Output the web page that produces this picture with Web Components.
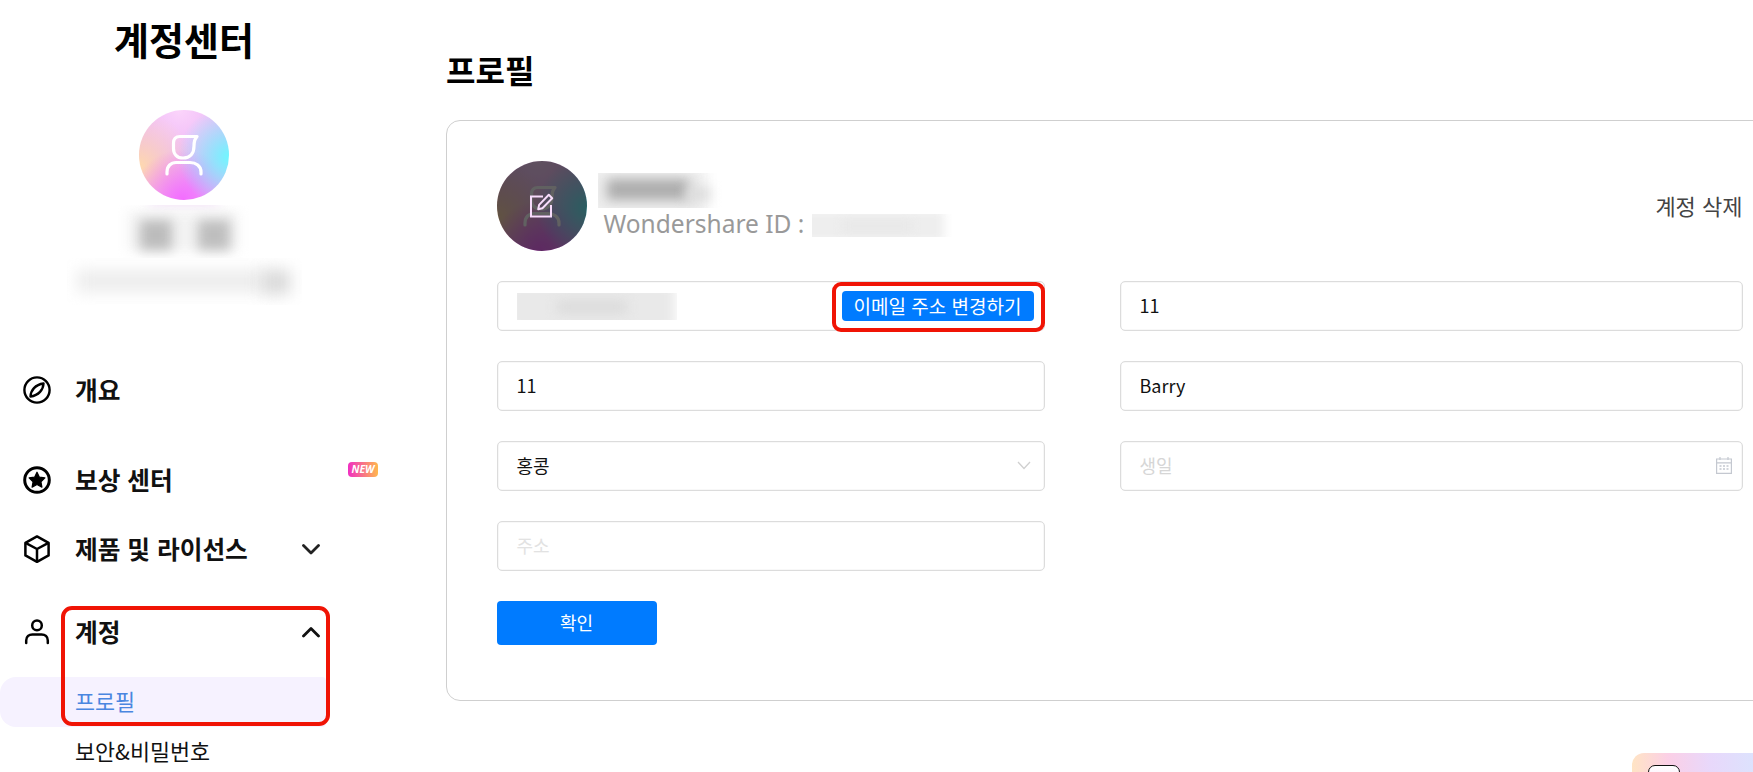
<!DOCTYPE html>
<html lang="ko"><head><meta charset="utf-8"><title>계정센터</title>
<style>
html,body{margin:0;height:100%;background:#fff;overflow:hidden}
body{font-family:"Noto Sans CJK KR","Noto Sans",sans-serif;color:#000}
</style></head><body>
<app-shell>
  <account-sidebar slot="side">
    <nav-item style="margin-top:0" bold icon="compass">개요</nav-item>
    <nav-item style="margin-top:40px" bold icon="star" badge>보상 센터</nav-item>
    <nav-item style="margin-top:19px" bold icon="cube" chevron="down">제품 및 라이선스</nav-item>
    <nav-item style="margin-top:33px" bold icon="user" chevron="up">계정</nav-item>
    <nav-item style="margin-top:20px" active>프로필</nav-item>
    <nav-item>보안&amp;비밀번호</nav-item>
  </account-sidebar>
  <profile-panel slot="main"></profile-panel>
</app-shell>
<script>
const tpl=(el,html)=>{const s=el.attachShadow({mode:'open'});s.innerHTML=html;return s};
const ICONS={
 compass:'<circle cx="14" cy="14" r="12.6" fill="none" stroke="#000" stroke-width="2.4"/><path d="M20.500 7.500C20.300 13.500 15.800 19.500 7.500 20.500 7.700 14.500 12.200 8.500 20.500 7.500Z" fill="none" stroke="#000" stroke-width="2.400" stroke-linejoin="round"/>',
 star:'<circle cx="14" cy="14" r="12.3" fill="none" stroke="#000" stroke-width="3"/><path d="M14 6.200l2.400 5 5.500.7-4 3.800 1 5.400-4.900-2.600-4.900 2.600 1-5.400-4-3.800 5.500-.7Z" fill="#000" stroke="#000" stroke-width="1.200" stroke-linejoin="round"/>',
 cube:'<path d="M14 1.400 25.600 7.800v12.600L14 26.800 2.400 20.400V7.800Z" fill="none" stroke="#000" stroke-width="2.500" stroke-linejoin="round"/><path d="M3 8.200 14 14l11-5.800M14 14v12.400" fill="none" stroke="#000" stroke-width="2.500" stroke-linejoin="round"/>',
 user:'<circle cx="14" cy="7.400" r="4.800" fill="none" stroke="#000" stroke-width="2.500"/><path d="M3.200 25v-2.600C3.200 18.400 6 16.400 9.400 16.400h9.200c3.400 0 6.200 2 6.200 6V25" fill="none" stroke="#000" stroke-width="2.500" stroke-linecap="round"/>'
};
const LOGO='<svg viewBox="0 0 42 42" width="42" height="42" fill="none" stroke="#fff" stroke-width="3.200" stroke-linecap="round"><path d="M34 2.500H17C12.500 2.500 10.500 5.500 10.500 9v5.500C10.500 20 14 24 20 24 27 24 31 19.500 31 12 31 8 32 4.500 34 2.500Z" stroke-linejoin="round"/><path d="M4 40v-2C4 32 8 28.500 13 28.500H27C33 28.500 38 32 38 38v2"/></svg>';

customElements.define('app-shell',class extends HTMLElement{connectedCallback(){if(this.shadowRoot)return;tpl(this,`<style>
:host{display:flex;width:1753px;height:772px;overflow:hidden;position:relative}
.s{flex:0 0 446px;width:446px}.m{flex:1;min-width:0}
</style><div class="s"><slot name="side"></slot></div><div class="m"><slot name="main"></slot></div>
<promo-widget></promo-widget>`)}});

customElements.define('gradient-avatar',class extends HTMLElement{connectedCallback(){if(this.shadowRoot)return;
 const dim=this.hasAttribute('dim');
 tpl(this,`<style>
:host{display:block;width:90px;height:90px;position:relative;flex:none}
.c{width:90px;height:90px;border-radius:50%;display:flex;align-items:center;justify-content:center;
background:radial-gradient(circle at 100% 52%,#6ff7ff 0,rgba(111,247,255,0) 50%),radial-gradient(circle at 48% 100%,#f46cff 0,rgba(244,108,255,0) 50%),radial-gradient(circle at 0% 62%,#ffd9ae 0,rgba(255,217,174,0) 52%),radial-gradient(circle at 45% 0%,#fbd4fb 0,rgba(251,212,251,0) 60%),#e8aef5}
.d{position:absolute;inset:0;border-radius:50%;background:rgba(0,0,0,.62);display:flex;align-items:center;justify-content:center}
</style><div class="c">${LOGO}</div>${dim?`<div class="d"><svg width="26" height="26" viewBox="0 0 26 26" fill="none" stroke="#f8dcfb" stroke-width="2"><path d="M14 3.500H2v20h20V12"/><path d="M19.800 1.800l3.400 3.400-9.800 10-4.200 1 .9-4.300Z" stroke-linejoin="round"/></svg></div>`:''}`)}});

customElements.define('blur-block',class extends HTMLElement{connectedCallback(){if(this.shadowRoot)return;
 const blobs=(this.getAttribute('blobs')||'').split(';').filter(Boolean).map(b=>{const[x,y,w,h,c]=b.split(',');return `<i style="left:${x}px;top:${y}px;width:${w}px;height:${h}px;background:${c}"></i>`}).join('');
 tpl(this,`<style>
:host{display:block;position:relative;overflow:hidden;flex:none}
i{position:absolute;display:block;filter:blur(var(--b,6px))}
</style>${blobs}`)}});

customElements.define('account-sidebar',class extends HTMLElement{connectedCallback(){if(this.shadowRoot)return;tpl(this,`<style>
:host{display:block;width:368px}
h1{margin:0;height:78px;line-height:78px;font-size:38px;font-weight:700;text-align:center;margin-bottom:32px}
.top{display:flex;flex-direction:column;align-items:center;margin-bottom:60px}
.n{margin-top:5px;width:132px;height:53px}
.e{width:235px;height:47px}
nav{display:block;position:relative}
.ring{position:absolute;left:61px;top:241px;width:261px;height:112px;border:4px solid #f01405;border-radius:11px;pointer-events:none}
</style>
<h1>계정센터</h1>
<div class="top"><gradient-avatar></gradient-avatar>
<blur-block class="n" blobs="32,-10,68,10,#efd9f6;10,6,110,40,#f3f3f3;22,15,32,30,#bcbcbc;80,15,32,30,#bebebe" style="--b:6px"></blur-block>
<blur-block class="e" blobs="10,12,190,22,#ececec;195,12,28,24,#d8d8d8" style="--b:8px"></blur-block></div>
<nav><slot></slot><div class="ring"></div></nav>`)}});

customElements.define('nav-item',class extends HTMLElement{connectedCallback(){if(this.shadowRoot)return;
 const bold=this.hasAttribute('bold'),act=this.hasAttribute('active'),ic=this.getAttribute('icon'),ch=this.getAttribute('chevron');
 const chev=ch?`<svg class="ch" width="18" height="12" viewBox="0 0 18 12" fill="none" stroke="${ch=='up'?'#111':'#222'}" stroke-width="2.800" stroke-linecap="round" stroke-linejoin="round"><path d="${ch=='up'?'M1.500 10 9 2.500 16.500 10':'M1.500 2.500 9 10 16.500 2.500'}"/></svg>`:'';
 tpl(this,`<style>
:host{display:block;width:326px}
.r{height:50px;display:flex;align-items:center;position:relative;padding:0 0 2px 75px;box-sizing:border-box;border-radius:16px 4px 4px 16px;font-size:${bold?24.7:21.8}px;font-weight:${bold?700:400};color:${act?'#4a86e0':'#111'};background:${act?'#f6f2ff':'transparent'};line-height:1;white-space:nowrap}
.ic{position:absolute;left:23px;top:11px}
.ch{position:absolute;left:302px;top:19px}
.nw{position:absolute;left:348px;top:7px;width:30px;height:15px;border-radius:4px;background:linear-gradient(90deg,#f02fc2,#ffb84d);color:#fff;font:italic 700 10.500px/15px "Open Sans",sans-serif;text-align:center}
</style><div class="r">${ic?`<svg class="ic" width="28" height="28" viewBox="0 0 28 28">${ICONS[ic]}</svg>`:''}<slot></slot>${chev}${this.hasAttribute('badge')?'<span class="nw">NEW</span>':''}</div>`)}});

customElements.define('form-field',class extends HTMLElement{connectedCallback(){if(this.shadowRoot)return;
 const ph=this.hasAttribute('placeholder');
 tpl(this,`<style>
:host{display:flex;align-items:center;justify-content:space-between;height:50px;box-sizing:border-box;border:1px solid #dcdcdc;border-radius:5px;padding:0 10px 2px 19px;font-size:18px;line-height:1;color:${ph?'#d6d6d6':'#111'};background:#fff;position:relative;box-shadow:inset 0 0 0 .3px #e4e4e4}
</style><slot></slot><slot name="end"></slot>`)}});

customElements.define('primary-button',class extends HTMLElement{connectedCallback(){if(this.shadowRoot)return;tpl(this,`<style>
:host{display:flex;align-items:center;justify-content:center;background:#007bff;color:#fff;border-radius:4px;line-height:1;font-size:18px;padding-bottom:2px;box-sizing:border-box;white-space:nowrap;flex:none}
</style><slot></slot>`)}});

customElements.define('profile-panel',class extends HTMLElement{connectedCallback(){if(this.shadowRoot)return;tpl(this,`<style>
:host{display:block}
h2{margin:0;height:120px;box-sizing:border-box;padding-top:45px;line-height:48px;font-size:32px;font-weight:700}
.card{width:1400px;height:581px;box-sizing:border-box;border:1.500px solid #cfcfcf;border-radius:14px;padding:40px 0 0 49.500px;background:#fff}
.head{width:1246px;display:flex;align-items:center;height:90px;position:relative}
.who{margin-left:11px;display:flex;flex-direction:column}
.name{width:136px;height:35px}
.idrow{display:flex;align-items:center;height:30px;margin-left:6px;margin-top:1px}
.id{font-family:"Noto Sans","Noto Sans CJK KR",sans-serif;font-size:24.500px;color:#999;line-height:1;white-space:nowrap}
.idb{width:142px;height:23px;margin-left:8px;position:relative;top:1px}
.del{margin-left:auto;font-size:22px;color:#444;line-height:1;padding-bottom:2px}
.form{width:1246px;margin-top:30px;display:grid;grid-template-columns:548px 623px;column-gap:75px;row-gap:30px}
.mail{width:160px;height:27px;position:relative;top:1px}
.ok{width:160px;height:44px;margin-top:30px}
.chg{position:absolute;right:10px;top:9px;width:192px;height:30px;font-size:19px}
.ring{position:absolute;right:-1px;top:0;width:205px;height:42px;border:4px solid #f01405;border-radius:9px}
form-field svg{display:block}
</style>
<h2>프로필</h2>
<div class="card">
 <div class="head"><gradient-avatar dim></gradient-avatar>
  <div class="who"><blur-block class="name" blobs="-10,-6,118,50,#ededed;9,6,82,21,#adadad;88,14,24,14,#dcdcdc" style="--b:6px"></blur-block>
  <div class="idrow"><span class="id">Wondershare ID :</span><blur-block class="idb" blobs="-10,-4,142,32,#eeeeee;30,6,70,12,#e8e8e8" style="--b:5px"></blur-block></div></div>
  <span class="del">계정 삭제</span></div>
 <div class="form">
  <form-field><blur-block class="mail" blobs="-10,-10,168,48,#e9e9e9;40,8,70,12,#dadada" style="--b:6px"></blur-block>
   <primary-button class="chg">이메일 주소 변경하기</primary-button><span class="ring"></span></form-field>
  <form-field>11</form-field>
  <form-field>11</form-field>
  <form-field>Barry</form-field>
  <form-field>홍콩<svg slot="end" width="14" height="9" viewBox="0 0 14 9" fill="none" stroke="#d0d0d0" stroke-width="1.300" style="margin-right:3px"><path d="M1 1l6 6.500L13 1"/></svg></form-field>
  <form-field placeholder>생일<svg slot="end" width="16" height="18" viewBox="0 0 16 18" fill="none" stroke="#c4c8d0" stroke-width="1.200"><path d="M.6 3h14.800v14.400H.6zM.6 6.800h14.800M4 1v3M12 1v3"/><path d="M3.500 10h2M7 10h2M10.500 10h2M3.500 13h2M7 13h2M10.500 13h2" stroke-width="1.300"/></svg></form-field>
  <form-field placeholder style="color:#e2e2e2">주소</form-field>
 </div>
 <primary-button class="ok">확인</primary-button>
</div>`)}});

customElements.define('promo-widget',class extends HTMLElement{connectedCallback(){if(this.shadowRoot)return;tpl(this,`<style>
:host{position:absolute;left:1632px;top:753px;width:121px;height:40px;border-radius:12px 0 0 0;background:linear-gradient(90deg,#ffe4c4,#fbcfe6 30%,#e8d8fb 65%,#dde2fd);display:block}
.i{position:absolute;left:16px;top:12px;width:30px;height:30px;border:1.500px solid #111;border-radius:7px;background:linear-gradient(#fff,#f6d4f4)}
</style><div class="i"></div>`)}});
</script>
</body></html>
